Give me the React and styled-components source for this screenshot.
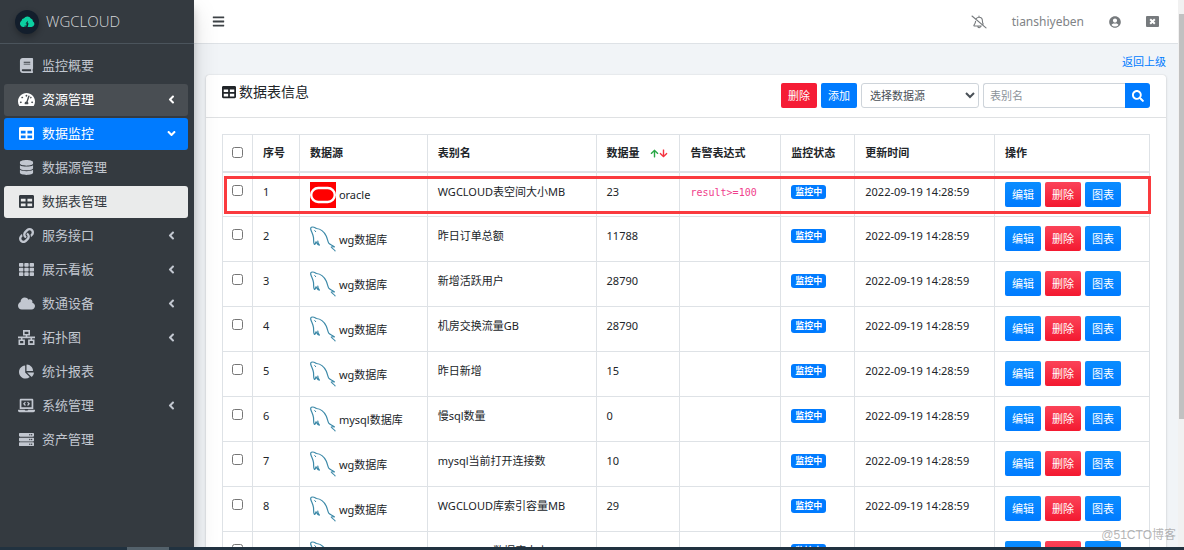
import React, { useState } from "react";
import styled, { createGlobalStyle, css } from "styled-components";
import {
  FaBook, FaTachometerAlt, FaTable, FaDatabase, FaLink, FaTh, FaCloud,
  FaChartPie, FaLaptopCode, FaServer, FaAngleLeft, FaAngleDown, FaBars, FaUserCircle,
  FaSearch, FaArrowUp, FaArrowDown,
} from "react-icons/fa";

const GlobalStyle = createGlobalStyle`
  *, *::before, *::after { box-sizing: border-box; }
  body {
    margin: 0;
    font-family: "Noto Sans", "Noto Sans CJK SC", sans-serif;
    font-size: 11px;
    line-height: 17px;
    color: #212529;
    background: #f1f4f7;
  }
  button, input, select { font: inherit; margin: 0; }
  a { color: #007bff; text-decoration: none; }
`;

const Screen = styled.div`
  display: flex;
  flex-direction: column;
  height: 100vh;
  overflow: hidden;
`;

const Shell = styled.div`
  display: flex;
  flex: 1;
  min-height: 0;
`;

const Sidebar = styled.aside`
  position: relative;
  z-index: 2;
  flex: 0 0 194px;
  background: #343a40;
  box-shadow: 0 12px 24px rgba(0, 0, 0, 0.15), 0 8px 8px rgba(0, 0, 0, 0.16);
`;

const Brand = styled.a`
  display: flex;
  align-items: center;
  gap: 7px;
  height: 44px;
  padding: 0 15px;
  border-bottom: 1px solid #4b545c;
  font-family: "Open Sans", "Noto Sans", sans-serif;
  font-size: 15px;
  font-weight: 300;
  color: #d4d7da;
`;

const BrandMark = styled.span`
  display: grid;
  place-items: center;
  width: 24px;
  height: 24px;
  border-radius: 50%;
  background: #131e2c;
  box-shadow: 0 3px 6px rgba(0, 0, 0, 0.3);
`;

const Menu = styled.nav`
  display: flex;
  flex-direction: column;
  gap: 2px;
  padding: 6px 6px 0 4px;
`;

const tones = {
  open: css`background: #494e53; color: #fff;`,
  active: css`background: #007bff; color: #fff;`,
  current: css`background: #eaebeb; color: #343a40;`,
};

const MenuItem = styled.a`
  display: flex;
  align-items: center;
  gap: 7px;
  height: 32px;
  padding: 0 10px 1px 14px;
  border-radius: 3px;
  font-size: 13px;
  color: #c2c7d0;
  ${(p) => tones[p.$tone]}
`;

const MenuIcon = styled.span`
  display: grid;
  place-items: center;
  width: 17px;
  font-size: ${(p) => p.$size || 15}px;
`;

const MenuLabel = styled.span`
  flex: 1;
`;

const Main = styled.div`
  display: flex;
  flex: 1;
  flex-direction: column;
  min-width: 0;
`;

const Topbar = styled.header`
  display: flex;
  align-items: center;
  justify-content: space-between;
  flex: 0 0 44px;
  padding: 0 19px 0 18px;
  background: #fff;
  border-bottom: 1px solid #dee2e6;
`;

const IconButton = styled.button`
  display: grid;
  place-items: center;
  padding: 0;
  border: 0;
  background: none;
  font-size: 13px;
  color: ${(p) => (p.$dark ? "#3d4246" : "#767a7d")};
`;

const TopActions = styled.div`
  display: flex;
  align-items: center;
  gap: 25px;
  font-size: 12px;
  color: #808386;
`;

const Content = styled.main`
  flex: 1;
  min-height: 0;
  padding: 9px 12px 0;
  overflow: hidden;
`;

const BackRow = styled.div`
  display: flex;
  justify-content: flex-end;
  height: 22px;
`;

const Card = styled.section`
  background: #fff;
  border-radius: 3px;
  box-shadow: 0 0 1px rgba(0, 0, 0, 0.2), 0 1px 3px rgba(0, 0, 0, 0.15);
`;

const CardHeader = styled.div`
  display: flex;
  justify-content: space-between;
  height: 43px;
  padding: 8px 16px;
  border-bottom: 1px solid #dfe1e3;
`;

const CardTitle = styled.h1`
  display: flex;
  align-items: center;
  gap: 3px;
  height: 17px;
  margin: 0;
  font-size: 14px;
  font-weight: 400;
`;

const Toolbar = styled.form`
  display: flex;
  gap: 4px;
`;

const Button = styled.button`
  height: 25px;
  padding: 0 7px;
  border: 0;
  border-radius: 2px;
  color: #fff;
  background: ${(p) => (p.$danger ? "#f51c35" : "#007bff")};
  ${(p) => p.$shaded && css`
    background: ${p.$danger
      ? "linear-gradient(#fb4358, #f31930)"
      : "linear-gradient(#0a8dff, #007bff)"};
  `}
`;

const SourceSelect = styled.select`
  width: 118px;
  height: 25px;
  padding: 0 4px;
  border: 1px solid #ced4da;
  border-radius: 3px;
  background: #fff;
  color: #495057;
`;

const SearchGroup = styled.div`
  display: flex;
`;

const SearchInput = styled.input`
  width: 142px;
  height: 25px;
  padding: 0 6px;
  border: 1px solid #ced4da;
  border-right: 0;
  border-radius: 3px 0 0 3px;
  &::placeholder { color: #8b9299; }
`;

const SearchButton = styled(Button)`
  display: grid;
  place-items: center;
  width: 25px;
  padding: 0;
  border-radius: 0 3px 3px 0;
  font-size: 12px;
`;

const CardBody = styled.div`
  position: relative;
  padding: 16px;
`;

const Highlight = styled.div`
  position: absolute;
  top: 58px;
  left: 18px;
  right: 15px;
  height: 38px;
  border: 3px solid #fa3a3e;
  pointer-events: none;
`;

const Table = styled.table`
  width: 100%;
  table-layout: fixed;
  border-collapse: collapse;
`;

const cell = css`
  padding: 0 9px 0 10px;
  border: 1px solid #dee2e6;
  text-align: left;
  white-space: nowrap;
  &:first-child { padding-left: 9px; }
`;

const Th = styled.th`
  ${cell}
  height: 37px;
  border-bottom-width: 2px;
  font-weight: 700;
`;

const Td = styled.td`
  ${cell}
  height: 45px;
  padding-top: 9px;
  line-height: 19px;
  vertical-align: top;
`;

const Check = styled.input`
  display: block;
  width: 11px;
  height: 11px;
  margin: 0;
  ${Td} & { margin-top: 3px; }
`;

const SortArrows = styled.span`
  display: inline-flex;
  margin-left: 10px;
  vertical-align: -1px;
`;

const Source = styled.div`
  display: flex;
  align-items: center;
  gap: 3px;
  line-height: 17px;
`;

const Code = styled.code`
  font-family: "DejaVu Sans Mono", monospace;
  font-size: 10px;
  color: #f0408c;
`;

const Badge = styled.span`
  display: block;
  width: 35px;
  margin-top: 3px;
  border-radius: 3px;
  background: #007bff;
  color: #fff;
  font-size: 9px;
  font-weight: 700;
  line-height: 14px;
  text-align: center;
`;

const Actions = styled.div`
  display: flex;
  gap: 4px;
`;

const Scrollbar = styled.div`
  flex: 0 0 6px;
  padding: 14px 0 0 1px;
  background: #f1f1f1;
`;

const Thumb = styled.div`
  height: 76%;
  background: #c1c1c1;
`;

const Taskbar = styled.footer`
  display: flex;
  flex: 0 0 3px;
  padding-left: 127px;
  background: #213240;
  position: relative;
  z-index: 3;
`;

const TaskbarTab = styled.div`
  width: 42px;
  background: #53616b;
`;

const Watermark = styled.div`
  position: absolute;
  right: 8px;
  bottom: 6px;
  z-index: 4;
  font-family: "Liberation Sans", "Noto Sans CJK SC", sans-serif;
  font-size: 12px;
  color: rgba(120, 120, 120, 0.55);
`;

const CloudLogo = () => (
  <svg width="16" height="14" viewBox="0 0 16 14" aria-hidden="true">
    <path fill="#0bd0a1" d="M4 12A3.400 3.400 0 0 1 2.500 5.800 3 3 0 0 1 5 3.200 4 4 0 0 1 11.800 3.600 3.300 3.300 0 0 1 14 6.500a3 3 0 0 1-1.500 5.500z" />
    <path fill="#131e2c" d="M9 5.800 6.500 8.600h1.300L7 12h1.600l1-3.800H8.500zM5.500 12l.3-1.500h1L6.500 12z" />
  </svg>
);

const OracleLogo = () => (
  <svg width="26" height="26" viewBox="0 0 26 26" aria-hidden="true">
    <path fill="#f00" d="M0 0h26v26H0z" />
    <rect x="1.200" y="6" width="23.600" height="14" rx="7" fill="#f00" stroke="#fff" strokeWidth="2.400" />
  </svg>
);

const DolphinLogo = () => (
  <svg width="26" height="26" viewBox="0 0 26 26" fill="none" stroke="#3c89a8" strokeLinecap="round" strokeLinejoin="round" aria-hidden="true">
    <path strokeWidth="1.200" d="M3.500 11.500C3 8 1.500 6 .8 3.500.2 1.300 2 .6 4 1.200c1 .3 1.700.8 2.400 1.300 4 .3 7.800 3.500 9.800 7.500 1.200 2.600 1.500 5.500 2.600 7.200 1.100 1.500 3.700 1.900 5.400 3.600" />
    <path strokeWidth="1.200" d="M3.500 11.500c.3 2.500-.3 5.200.9 6.900.8.400 1.200-1.500 1.600-2.600.8 1.700 1.500 3 3.400 3.400-1.200-1.700-1.800-2.800-1.600-4.200" />
    <path strokeWidth="1.100" d="M24.200 20.800c-1.200-.2-2.200-.1-3 .2 1 1.600 2.600 2.300 3.900 3.800" />
    <path strokeWidth="1" d="M4.700 4.500l1 1.200" />
  </svg>
);

const BellOff = () => (
  <svg width="16" height="14" viewBox="0 0 16 14" fill="none" stroke="currentColor" strokeWidth="1.100" strokeLinecap="round" strokeLinejoin="round" aria-hidden="true">
    <path d="M1 1l14 11.800M5.200 3.600C6 2.600 7 2.200 8 2.200c2 0 3.400 1.600 3.400 3.600 0 1.500.3 2.500.8 3.300M8 1v1M4.600 6.200c-.1 2-.9 3-1.600 3.900-.3.400 0 .9.500.9h6.900M6.800 11c0 .9.500 1.700 1.300 1.700S9.400 12 9.400 11.200" />
  </svg>
);

const Network = () => (
  <svg width="17" height="15" viewBox="0 0 17 15" fill="none" stroke="currentColor" strokeWidth="1.600" aria-hidden="true">
    <path d="M5.800.9h5.400v3.800H5.800zM1.300 10.200h4.800v3.900H1.300zM10.900 10.200h4.800v3.900h-4.800zM8.500 4.700v2.700M0 7.400h17M3.700 7.400v2.800M13.300 7.400v2.800" />
  </svg>
);

const CloseBox = () => (
  <svg width="13" height="11" viewBox="0 0 13 11" aria-hidden="true">
    <rect width="13" height="11" rx="1" fill="currentColor" />
    <path d="M4.200 3.200l4.600 4.600m0-4.600L4.200 7.800" stroke="#fff" strokeWidth="2" />
  </svg>
);

const menu = [
  { label: "监控概要", icon: FaBook },
  { label: "资源管理", icon: FaTachometerAlt, arrow: FaAngleLeft, tone: "open", size: 17 },
  { label: "数据监控", icon: FaTable, arrow: FaAngleDown, tone: "active" },
  { label: "数据源管理", icon: FaDatabase },
  { label: "数据表管理", icon: FaTable, tone: "current" },
  { label: "服务接口", icon: FaLink, arrow: FaAngleLeft },
  { label: "展示看板", icon: FaTh, arrow: FaAngleLeft },
  { label: "数通设备", icon: FaCloud, arrow: FaAngleLeft, size: 17 },
  { label: "拓扑图", icon: Network, arrow: FaAngleLeft },
  { label: "统计报表", icon: FaChartPie },
  { label: "系统管理", icon: FaLaptopCode, arrow: FaAngleLeft, size: 17 },
  { label: "资产管理", icon: FaServer },
];

const rows = [
  { source: "oracle", name: "WGCLOUD表空间大小MB", count: 23, rule: "result>=100", oracle: true },
  { source: "wg数据库", name: "昨日订单总额", count: 11788 },
  { source: "wg数据库", name: "新增活跃用户", count: 28790 },
  { source: "wg数据库", name: "机房交换流量GB", count: 28790 },
  { source: "wg数据库", name: "昨日新增", count: 15 },
  { source: "mysql数据库", name: "慢sql数量", count: 0 },
  { source: "wg数据库", name: "mysql当前打开连接数", count: 10 },
  { source: "wg数据库", name: "WGCLOUD库索引容量MB", count: 29 },
  { source: "wg数据库", name: "WGCLOUD数据库大小", count: 31 },
];

const columns = [30, 47, 128, 169, 84, 101, 74, 140, 155];
const columnTotal = columns.reduce((sum, width) => sum + width, 0);

const Col = styled.col`
  width: ${(p) => (p.$share / columnTotal) * 100}%;
`;

export default function App() {
  const [keyword, setKeyword] = useState("");
  return (
    <Screen>
      <GlobalStyle />
      <Shell>
        <Sidebar>
          <Brand href="#">
            <BrandMark><CloudLogo /></BrandMark>
            WGCLOUD
          </Brand>
          <Menu>
            {menu.map(({ label, icon: Icon, arrow: Arrow, tone, size }) => (
              <MenuItem href="#" key={label} $tone={tone}>
                <MenuIcon $size={size}><Icon /></MenuIcon>
                <MenuLabel>{label}</MenuLabel>
                {Arrow && <Arrow />}
              </MenuItem>
            ))}
          </Menu>
        </Sidebar>
        <Main>
          <Topbar>
            <IconButton $dark aria-label="菜单"><FaBars /></IconButton>
            <TopActions>
              <IconButton aria-label="通知"><BellOff /></IconButton>
              <span>tianshiyeben</span>
              <IconButton aria-label="账号"><FaUserCircle size={12} /></IconButton>
              <IconButton aria-label="退出"><CloseBox /></IconButton>
            </TopActions>
          </Topbar>
          <Content>
            <BackRow><a href="#">返回上级</a></BackRow>
            <Card>
              <CardHeader>
                <CardTitle><FaTable /> 数据表信息</CardTitle>
                <Toolbar onSubmit={(e) => e.preventDefault()}>
                  <Button type="button" $danger>删除</Button>
                  <Button type="button">添加</Button>
                  <SourceSelect aria-label="数据源">
                    <option>选择数据源</option>
                    <option>oracle</option>
                    <option>wg数据库</option>
                  </SourceSelect>
                  <SearchGroup>
                    <SearchInput
                      aria-label="表别名"
                      placeholder="表别名"
                      value={keyword}
                      onChange={(e) => setKeyword(e.target.value)}
                    />
                    <SearchButton aria-label="搜索"><FaSearch /></SearchButton>
                  </SearchGroup>
                </Toolbar>
              </CardHeader>
              <CardBody>
                <Table>
                  <colgroup>
                    {columns.map((share, i) => <Col key={i} $share={share} />)}
                  </colgroup>
                  <thead>
                    <tr>
                      <Th><Check type="checkbox" aria-label="全选" /></Th>
                      <Th>序号</Th>
                      <Th>数据源</Th>
                      <Th>表别名</Th>
                      <Th>
                        数据量
                        <SortArrows>
                          <FaArrowUp size={9} color="#28a745" />
                          <FaArrowDown size={9} color="#f5333f" />
                        </SortArrows>
                      </Th>
                      <Th>告警表达式</Th>
                      <Th>监控状态</Th>
                      <Th>更新时间</Th>
                      <Th>操作</Th>
                    </tr>
                  </thead>
                  <tbody>
                    {rows.map((row, i) => (
                      <tr key={i}>
                        <Td><Check type="checkbox" aria-label={row.name} /></Td>
                        <Td>{i + 1}</Td>
                        <Td>
                          <Source>
                            {row.oracle ? <OracleLogo /> : <DolphinLogo />}
                            {row.source}
                          </Source>
                        </Td>
                        <Td>{row.name}</Td>
                        <Td>{row.count}</Td>
                        <Td>{row.rule && <Code>{row.rule}</Code>}</Td>
                        <Td><Badge>监控中</Badge></Td>
                        <Td>2022-09-19 14:28:59</Td>
                        <Td>
                          <Actions>
                            <Button $shaded>编辑</Button>
                            <Button $shaded $danger>删除</Button>
                            <Button $shaded>图表</Button>
                          </Actions>
                        </Td>
                      </tr>
                    ))}
                  </tbody>
                </Table>
                <Highlight />
              </CardBody>
            </Card>
          </Content>
        </Main>
        <Scrollbar><Thumb /></Scrollbar>
      </Shell>
      <Taskbar><TaskbarTab /></Taskbar>
      <Watermark>@51CTO博客</Watermark>
    </Screen>
  );
}
